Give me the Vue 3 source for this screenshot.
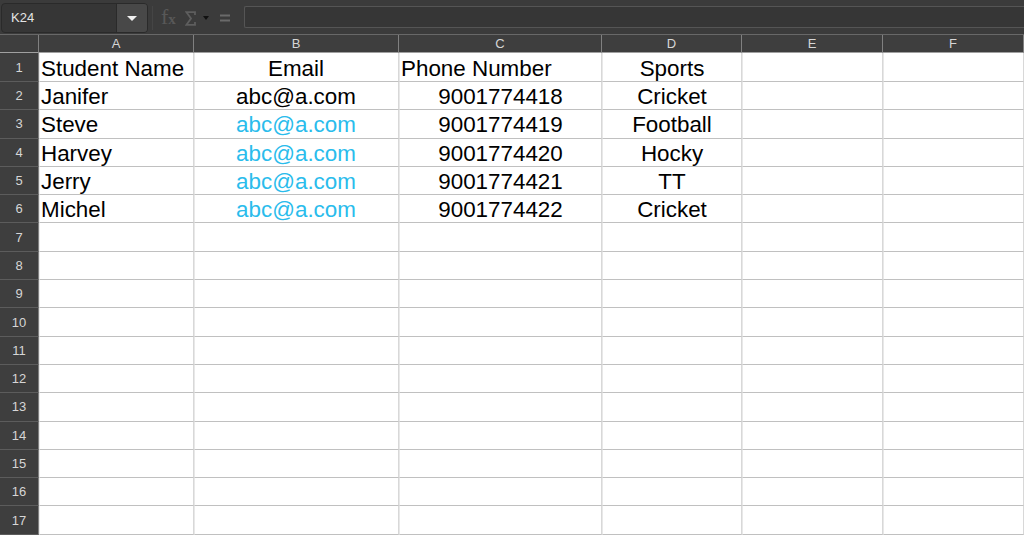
<script setup>
const columns = ['A', 'B', 'C', 'D', 'E', 'F']

const students = [
  { name: 'Janifer', email: 'abc@a.com', phone: '9001774418', sport: 'Cricket', plain: true },
  { name: 'Steve', email: 'abc@a.com', phone: '9001774419', sport: 'Football' },
  { name: 'Harvey', email: 'abc@a.com', phone: '9001774420', sport: 'Hocky' },
  { name: 'Jerry', email: 'abc@a.com', phone: '9001774421', sport: 'TT' },
  { name: 'Michel', email: 'abc@a.com', phone: '9001774422', sport: 'Cricket' }
]

const emptyRows = []
for (let n = 7; n <= 17; n++) emptyRows.push(n)
</script>

<template>
  <div class="app">
    <div class="toolbar">
      <div class="name-box">
        <span class="name-value">K24</span>
        <span class="name-arrow"><i class="tri white"></i></span>
      </div>
      <div class="sep"></div>
      <div class="tools">
        <span class="fx"><span class="fx-f">f</span><span class="fx-x">x</span></span>
        <svg class="sigma" width="11" height="15" viewBox="0 0 11 15">
          <path d="M10 4 V1.2 H1.5 L6 7.5 L1.5 13.8 H10 V11" fill="none" stroke="#5e5e5e" stroke-width="1.8"/>
        </svg>
        <i class="tri dark"></i>
        <svg class="equals" width="10" height="8" viewBox="0 0 10 8">
          <path d="M0 1.5 H10 M0 6.5 H10" stroke="#6a6a6a" stroke-width="2"/>
        </svg>
      </div>
      <div class="formula"></div>
    </div>

    <div class="sheet">
      <div class="corner"></div>
      <div v-for="col in columns" :key="col" class="col-head">{{ col }}</div>

      <div class="row-head">1</div>
      <div class="cell title">Student Name</div>
      <div class="cell title center mail">Email</div>
      <div class="cell title">Phone Number</div>
      <div class="cell title center">Sports</div>
      <div class="cell"></div>
      <div class="cell"></div>

      <template v-for="(s, i) in students" :key="s.phone">
        <div class="row-head">{{ i + 2 }}</div>
        <div class="cell">{{ s.name }}</div>
        <div class="cell center mail" :class="{ link: !s.plain }">{{ s.email }}</div>
        <div class="cell center">{{ s.phone }}</div>
        <div class="cell center">{{ s.sport }}</div>
        <div class="cell"></div>
        <div class="cell"></div>
      </template>

      <template v-for="n in emptyRows" :key="n">
        <div class="row-head">{{ n }}</div>
        <div v-for="col in columns" :key="col" class="cell"></div>
      </template>
    </div>
  </div>
</template>

<style>
html, body {
  margin: 0;
  background: #fff;
}
</style>

<style scoped>
.app {
  width: 1024px;
  height: 535px;
  overflow: hidden;
  font-family: "Liberation Sans", Arial, sans-serif;
}

.toolbar {
  display: flex;
  align-items: center;
  height: 34px;
  box-sizing: border-box;
  padding: 2px 0 0 1px;
  background: #3b3b3b;
}

.name-box {
  display: flex;
  width: 147px;
  height: 30px;
  box-sizing: border-box;
  border: 1px solid #2a2a2a;
  border-radius: 4px;
  background: #363636;
  overflow: hidden;
}

.name-value {
  flex: 1;
  padding-left: 9px;
  font-size: 13px;
  line-height: 28px;
  color: #e4e4e4;
  border-right: 1px solid #2a2a2a;
}

.name-arrow {
  display: flex;
  align-items: center;
  justify-content: center;
  width: 30px;
  background: #484848;
}

.tri {
  display: block;
  width: 0;
  height: 0;
  border-left: 5px solid transparent;
  border-right: 5px solid transparent;
}

.tri.white {
  border-top: 5px solid #f0f0f0;
}

.tri.dark {
  border-left-width: 3.5px;
  border-right-width: 3.5px;
  border-top: 4px solid #111;
}

.sep {
  width: 1px;
  height: 24px;
  margin-left: 4px;
  background: #454545;
}

.tools {
  display: flex;
  align-items: center;
  width: 91px;
  padding-left: 8px;
  box-sizing: border-box;
}

.fx {
  display: flex;
  align-items: baseline;
  width: 15px;
  font-family: "Liberation Serif", serif;
  color: #585858;
}

.fx-f {
  font-size: 22px;
  line-height: 20px;
}

.fx-x {
  font-size: 15px;
  font-weight: bold;
  line-height: 20px;
}

.sigma {
  margin-left: 9px;
}

.tools .tri.dark {
  margin-left: 7px;
}

.equals {
  margin-left: 11px;
}

.formula {
  flex: 1;
  height: 22px;
  margin-top: -2px;
  box-sizing: border-box;
  border: 1px solid #555;
  border-right: none;
  border-radius: 2px 0 0 2px;
  background: #363636;
}

.sheet {
  display: grid;
  grid-template-columns: 39px 155px 205px 203px 140px 141px 141px;
  grid-template-rows: 18px 29px repeat(16, 28.3px);
  border-top: 1px solid #686868;
}

.corner,
.col-head,
.row-head {
  box-sizing: border-box;
  background: #3e3e3e;
  color: #d6d6d6;
  font-size: 13px;
  display: flex;
  align-items: center;
  justify-content: center;
  border-right: 1px solid #808080;
}

.corner,
.col-head {
  border-bottom: 1px solid #a0a0a0;
}

.row-head {
  border-bottom: 1px solid #5c5c5c;
}

.cell {
  box-sizing: border-box;
  border-left: 1px solid #e8e8e8;
  border-right: 1px solid #d8d8d8;
  border-bottom: 1px solid #c0c0c0;
  padding-left: 1px;
  font-size: 22.4px;
  line-height: 29px;
  color: #000;
  white-space: nowrap;
  overflow: hidden;
}

.cell.title {
  padding-top: 1px;
}

.cell.center {
  padding-left: 0;
  text-align: center;
}

.cell.mail {
  padding-right: 1px;
}

.cell.link {
  color: #2abcec;
}
</style>
